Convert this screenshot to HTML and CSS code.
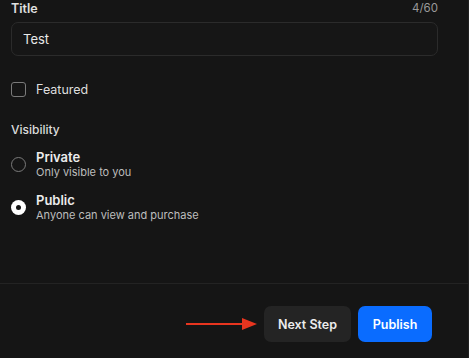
FILE: index.html
```html
<!DOCTYPE html>
<html lang="en">
<head>
    <title>Publish Listing</title>
    <link rel="stylesheet" href="styles.css">
</head>
<body>
    <div class="panel">
        <div class="form">
            <div class="field-head">
                <label class="field-label" for="title">Title</label>
                <span class="counter">4/60</span>
            </div>
            <div class="text-input" id="title">Test</div>

            <div class="check-row">
                <span class="checkbox"></span>
                <span class="check-label">Featured</span>
            </div>

            <div class="section-label">Visibility</div>
            <div class="option">
                <span class="radio"></span>
                <div class="option-text">
                    <div class="option-title">Private</div>
                    <div class="option-desc">Only visible to you</div>
                </div>
            </div>
            <div class="option">
                <span class="radio checked"></span>
                <div class="option-text">
                    <div class="option-title">Public</div>
                    <div class="option-desc">Anyone can view and purchase</div>
                </div>
            </div>
        </div>

        <div class="footer">
            <svg class="arrow" width="72" height="14" viewBox="0 0 72 14">
                <line x1="0" y1="7" x2="58" y2="7" stroke="#e8351f" stroke-width="2"/>
                <polygon points="56,1 71,7 56,13" fill="#e8351f"/>
            </svg>
            <button class="btn btn-secondary">Next Step</button>
            <button class="btn btn-primary">Publish</button>
        </div>
    </div>
</body>
</html>
```

FILE: styles.css
```css
* {
    box-sizing: border-box;
}

body {
    margin: 0;
    height: 100vh;
    background: #151515;
    color: #e4e4e4;
    font-family: Inter, "Noto Sans", sans-serif;
}

.panel {
    height: 100%;
    display: flex;
    flex-direction: column;
    border-right: 1px solid #202020;
}

.form {
    flex: 1;
    padding: 0 30px 0 11px;
}

.field-head {
    display: flex;
    justify-content: space-between;
    align-items: center;
    height: 16px;
}

.field-label {
    font-size: 12.5px;
    font-weight: 600;
    color: #e0e0e0;
}

.counter {
    font-size: 11.5px;
    color: #9a9a9a;
}

.text-input {
    margin-top: 6px;
    height: 34px;
    border: 1px solid #2b2b2b;
    border-radius: 7px;
    background: #161616;
    padding: 0 11px;
    display: flex;
    align-items: center;
    font-size: 13px;
    color: #e8e8e8;
}

.check-row {
    margin-top: 25px;
    display: flex;
    align-items: center;
    height: 16px;
}

.checkbox {
    width: 15px;
    height: 15px;
    border: 1.5px solid #7a7a7a;
    border-radius: 3px;
}

.check-label {
    margin-left: 10px;
    font-size: 12.5px;
    color: #dedede;
}

.section-label {
    margin-top: 25px;
    font-size: 12px;
    font-weight: 500;
    line-height: 16px;
    color: #dcdcdc;
}

.option {
    display: flex;
    align-items: center;
    margin-top: 11px;
}

.option + .option {
    margin-top: 12px;
}

.radio {
    width: 15px;
    height: 15px;
    border-radius: 50%;
    border: 1.5px solid #7a7a7a;
    flex-shrink: 0;
}

.radio.checked {
    border: none;
    background: #ffffff;
    position: relative;
}

.radio.checked::after {
    content: "";
    position: absolute;
    left: 5px;
    top: 5px;
    width: 5px;
    height: 5px;
    border-radius: 50%;
    background: #151515;
}

.option-text {
    margin-left: 10px;
}

.option-title {
    font-size: 13px;
    font-weight: 600;
    line-height: 16px;
    color: #ececec;
}

.option-desc {
    font-size: 11px;
    line-height: 15px;
    color: #bdbdbd;
}

.footer {
    border-top: 1px solid #232323;
    display: flex;
    justify-content: flex-end;
    align-items: center;
    padding: 22px 36px 16px 0;
}

.arrow {
    margin-right: 6px;
}

.btn {
    height: 36px;
    border: none;
    border-radius: 7px;
    font-family: Inter, "Noto Sans", sans-serif;
    font-size: 12.5px;
    font-weight: 600;
    cursor: pointer;
}

.btn-secondary {
    width: 87px;
    background: #242424;
    color: #ececec;
}

.btn-primary {
    width: 74px;
    margin-left: 7px;
    background: #0a6cff;
    color: #ffffff;
}
```
